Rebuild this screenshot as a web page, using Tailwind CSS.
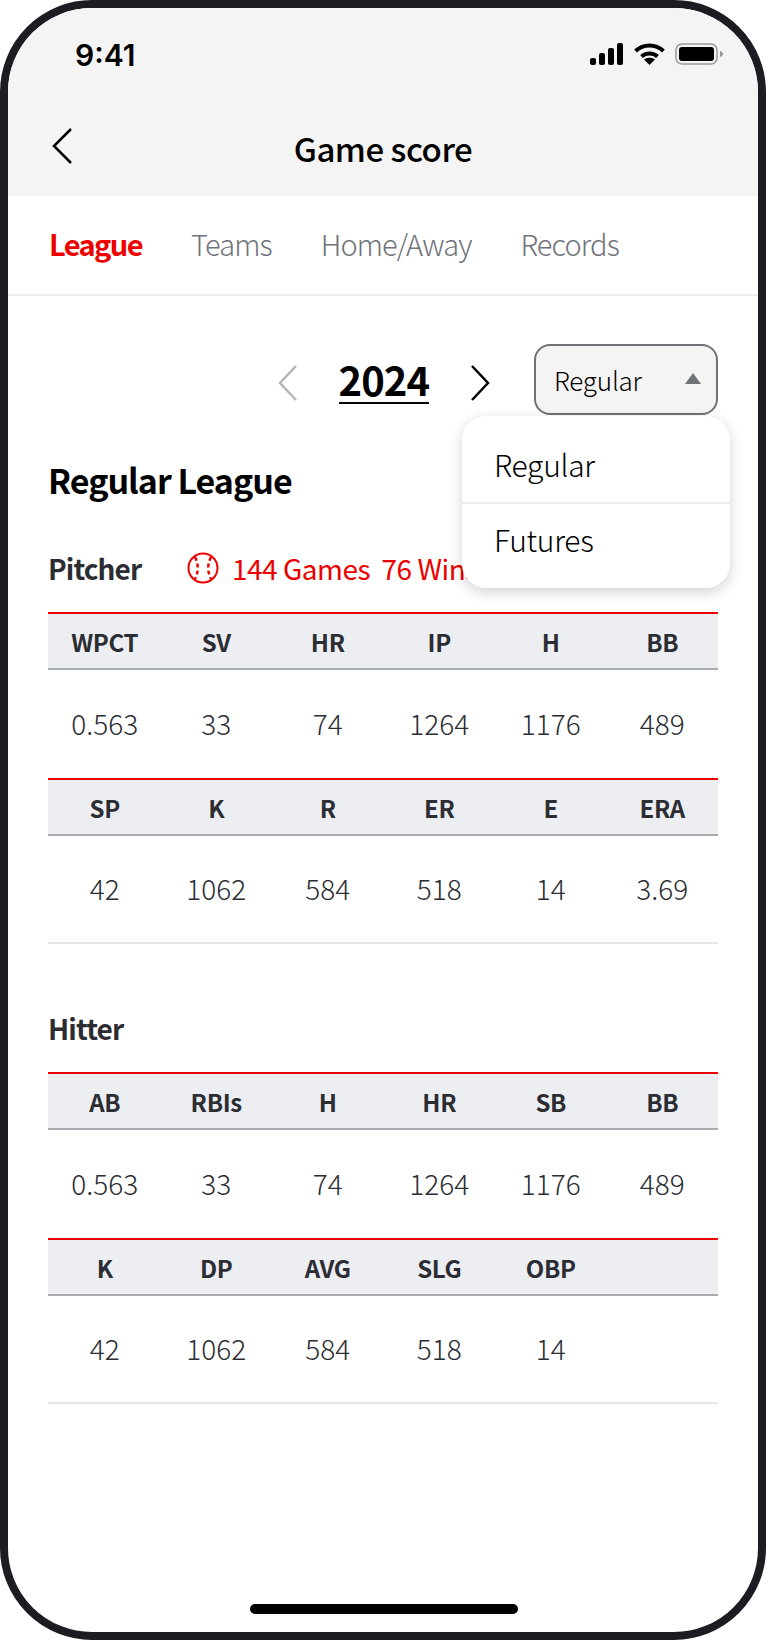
<!DOCTYPE html>
<html>
<head>
  <script src="https://cdn.jsdelivr.net/npm/@tailwindcss/browser@4"></script>
  <script>
    function statTable(head, vals, last) {
      return `
        <div class="border-t-2 border-[#ec0000]">
          <div class="grid grid-cols-6 h-[56px] items-center bg-[#eceef2] border-b-2 border-[#a9acb1] pl-[1px] pt-[2px] text-[24px] font-bold tracking-[-0.3px] text-[#2b2d33] text-center">
            ${head.map(h => `<div>${h}</div>`).join('')}
          </div>
          <div class="grid grid-cols-6 h-[108px] items-center pl-[1px] pb-[3px] text-[28px] font-light text-[#2b2d33] text-center ${last ? 'border-b-2 border-[#e6e6e9]' : ''}">
            ${vals.map(v => `<div>${v}</div>`).join('')}
          </div>
        </div>`;
    }
    window.onload = () => {
      document.getElementById('pitcher').innerHTML =
        statTable(['WPCT','SV','HR','IP','H','BB'], ['0.563','33','74','1264','1176','489']) +
        statTable(['SP','K','R','ER','E','ERA'], ['42','1062','584','518','14','3.69'], true);
      document.getElementById('hitter').innerHTML =
        statTable(['AB','RBIs','H','HR','SB','BB'], ['0.563','33','74','1264','1176','489']) +
        statTable(['K','DP','AVG','SLG','OBP',''], ['42','1062','584','518','14',''], true);
    };
  </script>
</head>
<body class="bg-white">
  <div class="relative w-[766px] h-[1640px] overflow-hidden rounded-[92px] border-8 border-[#1c1c22] bg-white font-['Noto_Sans_CJK_KR','Noto_Sans',sans-serif] text-black">
    <!-- Status bar + header -->
    <div class="h-[188px] bg-[#f4f4f4]">
      <div class="flex h-[94px] items-center justify-between pl-[67px] pr-[34px]">
        <span class="font-['Inter',sans-serif] text-[30px] font-semibold">9:41</span>
        <div class="mb-[3px] flex items-center gap-[10px]">
          <svg width="34" height="22" viewBox="0 0 34 22"><rect x="0" y="15" width="6" height="7" rx="2"/><rect x="9" y="10" width="6" height="12" rx="2"/><rect x="18" y="5" width="6" height="17" rx="2"/><rect x="27" y="0" width="6" height="22" rx="2"/></svg>
          <svg width="31" height="22" viewBox="0 0 31 22" fill="none" stroke="#000" stroke-width="4"><path d="M1.500 8C9.500 .5 21.500 .5 29.500 8"/><path d="M7.500 13.500C12 9.500 19 9.500 23.500 13.500"/><path d="M15.500 22L10 16.500C13 14.300 18 14.300 21 16.500Z" fill="#000" stroke="none"/></svg>
          <svg width="49" height="22" viewBox="0 0 49 22"><rect x="1" y="1" width="41" height="20" rx="6" fill="none" stroke="#999" stroke-width="1.500"/><rect x="4" y="4" width="35" height="14" rx="3"/><path d="M45 8c2 .6 3 1.500 3 3s-1 2.400-3 3z" fill="#999"/></svg>
        </div>
      </div>
      <div class="relative flex h-[94px] items-center justify-center">
        <svg class="absolute left-[44px] top-[26px]" width="20" height="36" viewBox="0 0 20 36" fill="none" stroke="#000" stroke-width="2.500"><path d="M19 1L2 18L19 35"/></svg>
        <span class="text-[33px] font-medium tracking-[-0.5px]">Game score</span>
      </div>
    </div>

    <!-- Tabs -->
    <div class="flex h-[100px] items-center gap-[49px] border-b-2 border-[#ececf0] pl-[41px] pb-[2px] text-[29px] font-light tracking-[-0.9px] text-[#70737a]">
      <span class="font-bold tracking-[-1.6px] text-[#ec0000]">League</span>
      <span>Teams</span>
      <span>Home/Away</span>
      <span>Records</span>
    </div>

    <div class="px-[40px]">
      <!-- Year switcher -->
      <div class="flex h-[71px] mt-[48px] items-center justify-end">
        <svg class="mt-[6px]" width="20" height="36" viewBox="0 0 20 36" fill="none" stroke="#b4b6ba" stroke-width="2.500"><path d="M18 1L2 18L18 35"/></svg>
        <span class="ml-[41px] mr-[41px] border-b-2 border-black text-[40px] font-bold leading-[46px] tracking-[-1px]">2024</span>
        <svg class="mt-[6px] mr-[44px]" width="20" height="36" viewBox="0 0 20 36" fill="none" stroke="#000" stroke-width="2.500"><path d="M2 1L18 18L2 35"/></svg>
        <div class="flex h-[71px] w-[184px] items-center justify-between rounded-[16px] border-2 border-[#6f7277] bg-[#f4f4f4] pl-[18px] pr-[15px] text-[26px] font-light tracking-[-0.2px]">
          <span class="mb-[1px]">Regular</span>
          <svg class="mb-[2px]" width="16" height="11" viewBox="0 0 16 11"><path d="M8 0L16 11H0Z" fill="#6f7277"/></svg>
        </div>
      </div>

      <h1 class="mt-[40px] text-[34px] font-bold leading-[50px] tracking-[-1px]">Regular League</h1>

      <!-- Pitcher -->
      <div class="mt-[43px] flex items-center h-[40px] mb-[24px] text-[28px]">
        <span class="w-[139px] font-bold tracking-[-0.9px] text-[#2b2d33]">Pitcher</span>
        <svg class="shrink-0" width="32" height="32" viewBox="0 0 32 32" fill="none" stroke="#ec0000" stroke-width="2"><circle cx="16" cy="16" r="14.500"/><path d="M8 5Q13.500 16 8 27M24 5Q18.500 16 24 27" stroke-width="2.500" stroke-dasharray="4 3"/></svg>
        <span class="ml-[13px] whitespace-nowrap text-[#ec0000] tracking-[-0.5px]">144 Games&nbsp;&nbsp;76 Wins</span>
      </div>
      <div id="pitcher"></div>

      <!-- Hitter -->
      <div class="mt-[64px] flex items-center h-[40px] mb-[24px] text-[28px]">
        <span class="font-bold tracking-[-0.9px] text-[#2b2d33]">Hitter</span>
      </div>
      <div id="hitter"></div>
    </div>

    <!-- Dropdown menu -->
    <div class="absolute left-[454px] top-[408px] w-[268px] rounded-[24px] bg-white shadow-[0_4px_14px_rgba(0,0,0,0.18)] text-[30px] font-light tracking-[-0.3px]">
      <div class="flex h-[88px] items-center pl-[32px] pt-[10px] border-b-2 border-[#ececf0]">Regular</div>
      <div class="flex h-[84px] items-center pl-[32px] pb-[14px]">Futures</div>
    </div>

    <!-- Home indicator -->
    <div class="absolute bottom-[18px] left-[242px] h-[10px] w-[268px] rounded-full bg-black"></div>
  </div>
</body>
</html>
